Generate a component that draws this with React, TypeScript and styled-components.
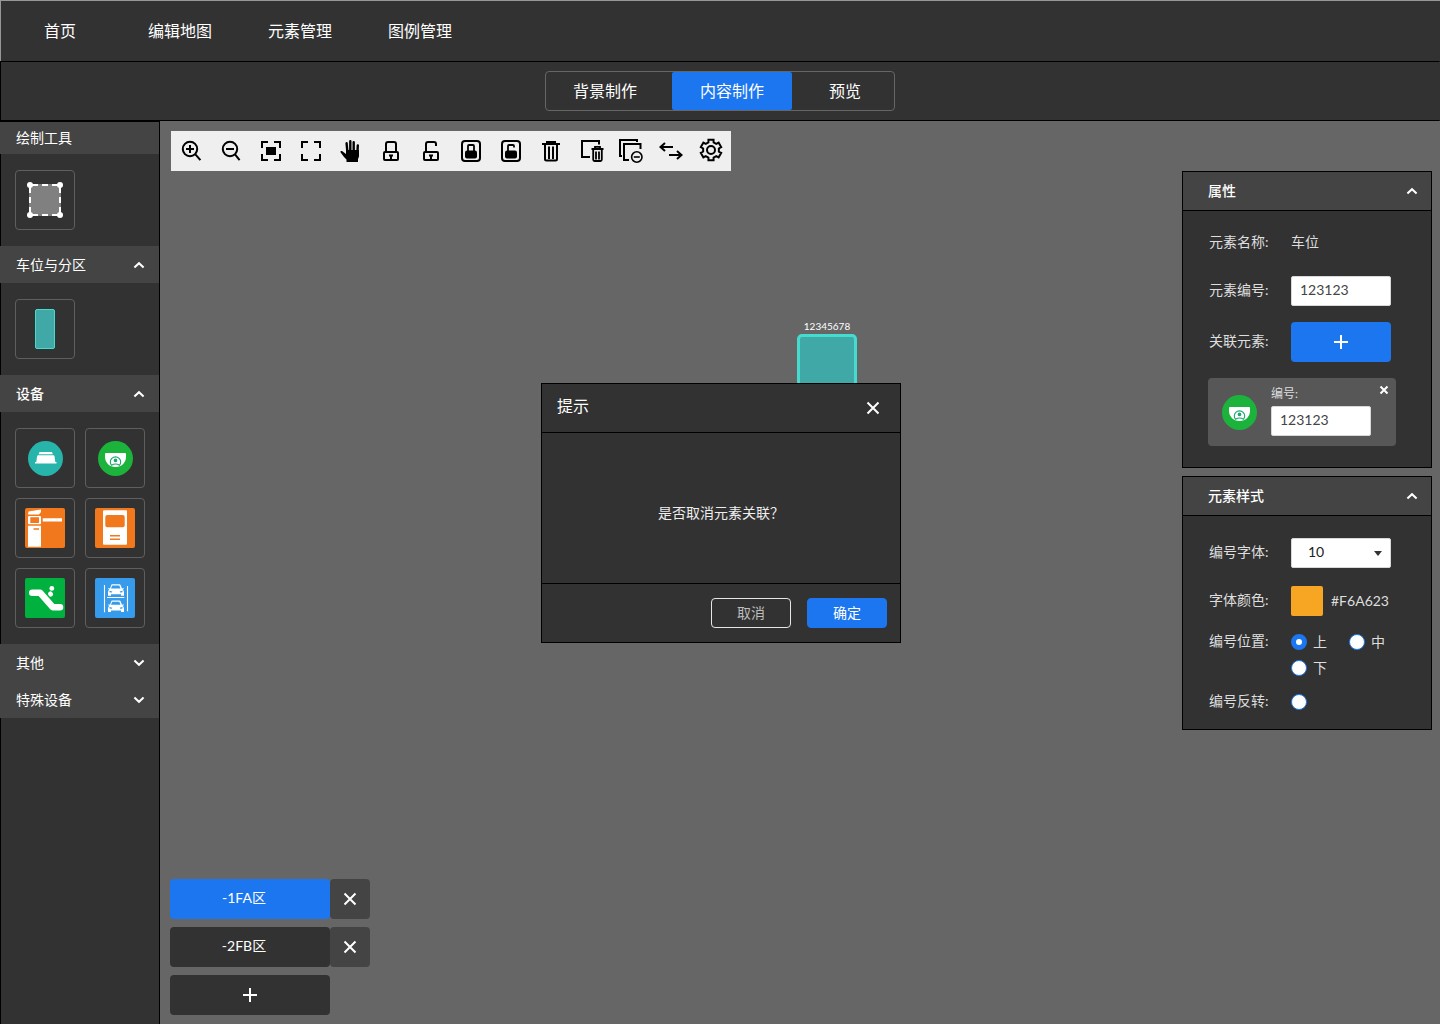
import React, { useState } from 'react';
import type { ReactNode } from 'react';
import styled, { createGlobalStyle } from 'styled-components';

const color = {
  bar: '#323232',
  raised: '#444444',
  card: '#575757',
  canvas: '#666666',
  outline: '#5f5f5f',
  blue: '#1b76f0',
  teal: '#41a8a8',
  tealEdge: '#45dccf',
  label: '#dedede',
};

const GlobalStyle = createGlobalStyle`
  *, *::before, *::after { box-sizing: border-box; }
  body {
    margin: 0;
    background: ${color.canvas};
    color: #fff;
    font: 14px/20px Lato, "Noto Sans CJK SC", sans-serif;
  }
  button, input, select { font: inherit; color: inherit; margin: 0; }
  button { padding: 0; border: 0; background: none; cursor: pointer; }
  svg { display: block; flex: none; }
`;

const Page = styled.div`
  min-height: 100vh;
  display: flex;
  flex-direction: column;
`;

/* ---------- top bars ---------- */

const TopNav = styled.nav`
  display: flex;
  height: 61px;
  background: ${color.bar};
  box-shadow: inset 1px 1px #979797;
`;

const NavLink = styled.a`
  display: flex;
  align-items: center;
  justify-content: center;
  width: 120px;
  font-size: 16px;
  color: #fff;
  text-decoration: none;
`;

const StepBar = styled.div`
  display: flex;
  align-items: center;
  justify-content: center;
  height: 60px;
  background: ${color.bar};
  border: 1px solid #000;
  border-right-color: ${color.bar};
`;

const Steps = styled.div`
  display: flex;
  height: 40px;
  border: 1px solid #666;
  border-radius: 4px;
`;

const Step = styled.button<{ $active?: boolean; $pad: string }>`
  padding: ${(p) => p.$pad};
  font-size: 16px;
  border-radius: 2px;
  background: ${(p) => (p.$active ? color.blue : 'transparent')};
`;

/* ---------- sidebar ---------- */

const Workspace = styled.div`
  flex: 1;
  display: flex;
`;

const Sidebar = styled.aside`
  width: 160px;
  display: flex;
  flex-direction: column;
  background: ${color.bar};
  border-top: 1px solid #000;
  border-right: 1px solid #000;
`;

const SidebarTitle = styled.h2`
  margin: 0;
  padding: 0 16px;
  font-size: 14px;
  font-weight: 400;
  line-height: 32px;
  background: ${color.raised};
`;

const GroupHeader = styled.button<{ $strong?: boolean }>`
  display: flex;
  align-items: center;
  justify-content: space-between;
  height: 37px;
  padding: 0 14px 0 16px;
  font-weight: ${(p) => (p.$strong ? 500 : 400)};
  background: ${color.raised};
`;

const GroupBody = styled.div`
  display: grid;
  grid-template-columns: 60px 60px;
  gap: 10px;
  padding: 16px 14px;
  border-left: 1px solid #000;
`;

const SidebarRest = styled.div`
  flex: 1;
  border-left: 1px solid #000;
`;

const Tile = styled.button`
  display: flex;
  align-items: center;
  justify-content: center;
  height: 60px;
  border: 1px solid ${color.outline};
  border-radius: 4px;
`;

/* ---------- canvas ---------- */

const Canvas = styled.main`
  position: relative;
  flex: 1;
  display: flex;
  flex-direction: column;
  padding: 10px 8px 9px 10px;
`;

const Toolbar = styled.div`
  align-self: flex-start;
  display: flex;
  margin-left: 1px;
  background: #efefef;
  color: #000;
`;

const Tool = styled.button`
  width: 40px;
  height: 40px;
`;

const CanvasBody = styled.div`
  flex: 1;
  display: flex;
  justify-content: space-between;
`;

const ParkingSpot = styled.div`
  position: absolute;
  top: 197px;
  left: 637px;
  width: 60px;
  text-align: center;
  font-size: 10px;
  line-height: 16px;
`;

const SpotShape = styled.div`
  height: 120px;
  background: ${color.teal};
  border: 3px solid ${color.tealEdge};
  border-radius: 5px;
`;

const Layers = styled.div`
  align-self: flex-end;
  display: flex;
  flex-direction: column;
  gap: 8px;
`;

const LayerRow = styled.div`
  display: flex;
`;

const LayerButton = styled.button<{ $active?: boolean }>`
  width: 160px;
  height: 40px;
  padding: 0 12px 2px 0;
  border-radius: 4px;
  background: ${(p) => (p.$active ? color.blue : color.bar)};
`;

const IconButton = styled.button<{ $bg?: string; $width?: string }>`
  display: flex;
  align-items: center;
  justify-content: center;
  width: ${(p) => p.$width ?? '40px'};
  height: 40px;
  border-radius: 4px;
  background: ${(p) => p.$bg ?? 'none'};
`;

/* ---------- property panels ---------- */

const Panels = styled.div`
  display: flex;
  flex-direction: column;
  gap: 8px;
  width: 250px;
`;

const Panel = styled.section`
  background: ${color.bar};
  border: 1px solid #000;
`;

const PanelHeader = styled.button`
  display: flex;
  align-items: center;
  justify-content: space-between;
  width: 100%;
  height: 39px;
  padding: 0 13px 0 25px;
  font-weight: 500;
  background: ${color.raised};
  border-bottom: 1px solid #000;
`;

const PanelBody = styled.div<{ $pad: string }>`
  padding: ${(p) => p.$pad};
  color: ${color.label};
`;

const Field = styled.div<{ $height: number; $gap: number; $top?: boolean }>`
  display: grid;
  grid-template-columns: 82px 1fr;
  align-items: ${(p) => (p.$top ? 'start' : 'center')};
  height: ${(p) => p.$height}px;
  margin-bottom: ${(p) => p.$gap}px;
`;

const FieldLabel = styled.label`
  padding-bottom: 2px;
  line-height: 24px;
`;

const TextInput = styled.input`
  width: 100px;
  height: 30px;
  padding: 0 8px 4px;
  color: #444;
  background: #fff;
  border: 1px solid #d8d8d8;
  border-radius: 2px;
`;

const LinkedCard = styled.div`
  display: flex;
  align-items: center;
  height: 68px;
  margin-left: -1px;
  padding: 0 7px 0 14px;
  background: ${color.card};
  border-radius: 4px;
`;

const LinkedField = styled.label`
  align-self: flex-start;
  display: flex;
  flex-direction: column;
  gap: 4px;
  margin: 8px 8px 0 14px;
  font-size: 12px;
  line-height: 16px;

  input { font-size: 14px; }
`;

const CardClose = styled.button`
  align-self: flex-start;
  padding-top: 7px;
`;

const SelectBox = styled.div`
  position: relative;
  width: 100px;
  color: #222;

  select {
    appearance: none;
    width: 100%;
    height: 30px;
    padding: 0 16px 2px;
    background: #fff;
    border: 1px solid #d8d8d8;
    border-radius: 2px;
  }
  svg {
    position: absolute;
    top: 13px;
    right: 9px;
    pointer-events: none;
  }
`;

const ColorValue = styled.div`
  display: flex;
  align-items: center;
  gap: 8px;
`;

const Swatch = styled.button`
  width: 32px;
  height: 30px;
  border-radius: 2px;
  background: #f6a623;
`;

const RadioGrid = styled.div`
  display: grid;
  grid-template-columns: 58px 1fr;
  grid-auto-rows: 26px;
`;

const RadioLabel = styled.label`
  display: flex;
  align-items: center;
  gap: 6px;
`;

const Radio = styled.input`
  appearance: none;
  width: 16px;
  height: 16px;
  margin: 0;
  border: 1px solid ${color.blue};
  border-radius: 50%;
  background: #fff;

  &:checked { border-width: 5px; }
`;

/* ---------- dialog ---------- */

const Overlay = styled.div`
  position: fixed;
  inset: 0;
  display: flex;
  align-items: center;
  justify-content: center;
  padding: 2px 0 0 2px;
`;

const Dialog = styled.section`
  width: 360px;
  background: ${color.bar};
  border: 1px solid #000;
`;

const DialogHeader = styled.header`
  display: flex;
  align-items: center;
  justify-content: space-between;
  height: 49px;
  padding: 0 7px 0 15px;
  border-bottom: 1px solid #000;

  h2 {
    margin: 0;
    padding-bottom: 4px;
    font-size: 16px;
    font-weight: 400;
  }
`;

const DialogBody = styled.div`
  display: flex;
  align-items: center;
  justify-content: center;
  height: 150px;
  padding-top: 10px;
  color: #eee;
`;

const DialogFooter = styled.footer`
  display: flex;
  align-items: center;
  justify-content: flex-end;
  gap: 16px;
  height: 59px;
  padding: 0 13px;
  border-top: 1px solid #000;
`;

const DialogButton = styled.button<{ $primary?: boolean }>`
  width: 80px;
  height: 30px;
  border-radius: 4px;
  border: 1px solid ${(p) => (p.$primary ? color.blue : '#e6e6e6')};
  background: ${(p) => (p.$primary ? color.blue : 'transparent')};
  color: ${(p) => (p.$primary ? '#fff' : '#bcbcbc')};
`;

/* ---------- icons ---------- */

const Chevron = ({ up }: { up?: boolean }) => (
  <svg width="12" height="8" viewBox="0 0 12 8" fill="none" stroke="#fff" strokeWidth="2">
    <path d={up ? 'M1.4 6.5 6 2.2 10.6 6.5' : 'M1.4 1.5 6 5.8 10.6 1.5'} />
  </svg>
);

const Cross = ({ size = 14 }: { size?: number }) => (
  <svg width={size} height={size} viewBox={`0 0 ${size} ${size}`} stroke="#fff" strokeWidth="2">
    <path d={`M1.5 1.5 ${size - 1.5} ${size - 1.5}M${size - 1.5} 1.5 1.5 ${size - 1.5}`} />
  </svg>
);

const Plus = () => (
  <svg width="14" height="14" viewBox="0 0 14 14" fill="#fff">
    <path d="M6 0h2v6h6v2H8v6H6V8H0V6h6z" />
  </svg>
);

const gearPath = (() => {
  const at = (deg: number, r: number) => {
    const a = (deg * Math.PI) / 180;
    return `${(20 + r * Math.cos(a)).toFixed(2)} ${(19 + r * Math.sin(a)).toFixed(2)}`;
  };
  const points: string[] = [];
  for (let i = 0; i < 6; i += 1) {
    const a = 30 + i * 60;
    points.push(at(a - 19, 8), at(a - 14, 10.6), at(a + 14, 10.6), at(a + 19, 8));
  }
  return `M${points.join('L')}Z`;
})();

const Brackets = () => <path d="M11 17v-6h6M23 11h6v6M29 23v6h-6M17 29h-6v-6" />;

const tools: { name: string; art: ReactNode }[] = [
  { name: '放大', art: <><circle cx="19" cy="18" r="7.2" /><path d="M24.4 23.4l5 5.8M15 18h8M19 14v8" /></> },
  { name: '缩小', art: <><circle cx="19" cy="18" r="7.2" /><path d="M24 23.4l4.6 5.8M15 18h8" /></> },
  { name: '适应画布', art: <><Brackets /><path d="M15 16h10v8H15z" fill="currentColor" stroke="none" /></> },
  { name: '全屏', art: <Brackets /> },
  {
    name: '拖动',
    art: (
      <>
        <path d="M15 19h13v6.500L27 28v3H15.500v-2.500L13 26l-3.500-4.800q-.4-1.700 1.500-1.200L15 23z" fill="currentColor" stroke="none" />
        <path d="M15.600 12.300 16.400 21M19.300 10.200V21M22.700 11.300V21M26.800 14.500l-.4 7" strokeWidth="2.400" strokeLinecap="round" />
      </>
    ),
  },
  {
    name: '锁定',
    art: <><rect x="13" y="21" width="14" height="8" rx="1" /><path d="M15 21v-8q0-2 2-2h6q2 0 2 2v8" /><path d="M18 23.500h4v2h-1V28h-2v-2.500h-1z" fill="currentColor" stroke="none" /></>,
  },
  {
    name: '解锁',
    art: <><rect x="13" y="21" width="14" height="8" rx="1" /><path d="M15 21v-8q0-2 2-2h6q2 0 2 2v2" /><path d="M18 23.500h4v2h-1V28h-2v-2.500h-1z" fill="currentColor" stroke="none" /></>,
  },
  {
    name: '全部锁定',
    art: <><rect x="11" y="10" width="18" height="20" rx="3" /><rect x="14" y="19.500" width="12" height="8" rx="2" fill="currentColor" stroke="none" /><path d="M17 20v-5q0-1 1-1h4q1 0 1 1v5" strokeWidth="1.800" /></>,
  },
  {
    name: '全部解锁',
    art: <><rect x="11" y="10" width="18" height="20" rx="3" /><rect x="14" y="19.500" width="12" height="8" rx="2" fill="currentColor" stroke="none" /><path d="M17 20v-5q0-1 1-1h4q1 0 1 1v1.500" strokeWidth="1.800" /></>,
  },
  { name: '删除', art: <path d="M11 13h18M16 12.500V11h8v1.500M14 14v14q0 1.500 1.500 1.500h9Q26 29.500 26 28V14M18 15.500V28M22 15.500V28" /> },
  {
    name: '删除图层',
    art: <><path d="M19 26h-8V10h17v3.500" /><path d="M20.500 18h12M24 17.500v-1.700h5v1.700M22.200 18.500v10q0 1.500 1.300 1.500h6q1.300 0 1.300-1.500v-10M25 20.500v8M28 20.500v8" strokeWidth="1.800" /></>,
  },
  {
    name: '清空',
    art: <><path d="M11 25H9V9h17v2M18 29h-5V13h16.500v5" /><circle cx="25.800" cy="26" r="5.200" strokeWidth="1.600" /><path d="M22.800 26h6" strokeWidth="1.600" /></>,
  },
  { name: '交换', art: <path d="M22 16H9.500M14 12l-4.500 4 4.500 4M18 24h12.500M26 20l4.500 4-4.500 4" /> },
  { name: '设置', art: <><path d={gearPath} /><circle cx="20" cy="19" r="4" /></> },
];

const AreaIcon = () => (
  <svg width="36" height="36" viewBox="0 0 36 36">
    <path d="M2 2h32v32H2z" fill="#808080" />
    <rect x="3" y="3" width="30" height="30" fill="none" stroke="#fff" strokeWidth="2" strokeDasharray="6 4" strokeDashoffset="-2" />
    <g fill="#fff">
      <circle cx="3" cy="3" r="3" /><circle cx="33" cy="3" r="3" />
      <circle cx="3" cy="33" r="3" /><circle cx="33" cy="33" r="3" />
    </g>
  </svg>
);

const SpotIcon = () => (
  <svg width="20" height="40" viewBox="0 0 20 40">
    <rect x=".5" y=".5" width="19" height="39" rx="1.500" fill={color.teal} stroke={color.tealEdge} />
  </svg>
);

const SensorIcon = () => (
  <svg width="35" height="35" viewBox="0 0 35 35">
    <circle cx="17.500" cy="17.500" r="17.500" fill="#27b5ab" />
    <path d="M11.500 11h12.500l.8 2.300H10.700zM10.300 14.200h15q1 0 1.200 1l.8 5.800H8.300l.8-5.800q.2-1 1.200-1zM7 21h21.500v1.500H7z" fill="#fff" />
  </svg>
);

const CameraIcon = () => (
  <svg width="35" height="35" viewBox="0 0 35 35">
    <circle cx="17.500" cy="17.500" r="17.500" fill="#1bb33c" />
    <path d="M7 12.800q0-.8 1-.8h19q1 0 1 .8v3.200c0 5-4 10-10.500 10S7 21 7 16z" fill="#fff" />
    <g fill="none" stroke="#16a86e" strokeWidth="1.100">
      <path d="M13.800 24.700a5.200 5.200 0 1 1 7.400 0M13.600 24.200q3.900-2.400 7.800 0" />
      <circle cx="17.500" cy="19.300" r="1.300" fill="#16a86e" />
    </g>
  </svg>
);

const GateIcon = () => (
  <svg width="40" height="40" viewBox="0 0 40 40">
    <rect width="40" height="40" rx="2" fill="#f1781d" />
    <path d="M3.500 3.500 16 1.500V4l-2 2.500H3zM3 17.800h13v20.900H3zM17.700 10.300H37v3.200H17.700z" fill="#fff" />
    <rect x="3" y="8" width="13" height="8.300" rx="1" fill="#fff" />
    <path d="M5.300 9.300h8.700v5.700H5.300zM8.500 20.300h5.500v1.500H8.500z" fill="#f1781d" />
  </svg>
);

const KioskIcon = () => (
  <svg width="40" height="40" viewBox="0 0 40 40">
    <rect width="40" height="40" rx="2" fill="#f1781d" />
    <rect x="8" y="2.300" width="24" height="34.500" rx="1" fill="#fff" />
    <rect x="10.300" y="7" width="19.400" height="12.300" rx="2" fill="#f1781d" />
    <path d="M15 27h10v1.500H15zM15 30.400h10v1.500H15z" fill="#f1781d" />
  </svg>
);

const EscalatorIcon = () => (
  <svg width="40" height="40" viewBox="0 0 40 40">
    <rect width="40" height="40" rx="2" fill="#00b140" />
    <path d="M7.300 14.700H15L27.700 29.200H35" fill="none" stroke="#fff" strokeWidth="6.600" strokeLinecap="round" strokeLinejoin="round" />
    <circle cx="26.800" cy="10.400" r="2.400" fill="#fff" />
    <ellipse cx="25.600" cy="16" rx="2.300" ry="2.700" transform="rotate(-30 25.600 16)" fill="#fff" />
  </svg>
);

const Car = ({ y }: { y: number }) => (
  <g transform={`translate(12.500 ${y})`}>
    <path d="M4.500 0h7.500q.8 0 1.200 1l1.300 3.200 1.500-.5.400 1-1.200.6Q16.500 6.500 16.500 8v3.500h-3V10h-10v1.500h-3V8q0-1.500 1.300-2.700L.6 4.700l.4-1 1.500.5L3.700 1Q4 0 4.500 0z" fill="#fff" />
    <path d="M4.700 1.300h7.100l1.200 3H3.500zM2 6.500l2.800.8-.5 1L2 8zM15 6.500l-2.800.8.500 1L15 8z" fill="#359bea" />
  </g>
);

const ParkingIcon = () => (
  <svg width="40" height="40" viewBox="0 0 40 40">
    <rect width="40" height="40" rx="2" fill="#359bea" />
    <path d="M9.500 7v27.300M32.500 8v25.300M12 19.500h17.300" stroke="#fff" strokeWidth="1.100" />
    <Car y={6.2} />
    <Car y={22.5} />
  </svg>
);

const devices = [
  { name: '车位探测器', art: <SensorIcon /> },
  { name: '摄像机', art: <CameraIcon /> },
  { name: '道闸', art: <GateIcon /> },
  { name: '查询机', art: <KioskIcon /> },
  { name: '扶梯', art: <EscalatorIcon /> },
  { name: '立体车位', art: <ParkingIcon /> },
];

export default function App() {
  const [open, setOpen] = useState(true);
  const [layer, setLayer] = useState('-1FA区');

  return (
    <Page>
      <GlobalStyle />
      <TopNav>
        {['首页', '编辑地图', '元素管理', '图例管理'].map((item) => (
          <NavLink key={item} href="#">{item}</NavLink>
        ))}
      </TopNav>
      <StepBar>
        <Steps>
          <Step $pad="0 35px 0 27px">背景制作</Step>
          <Step $pad="0 28px" $active>内容制作</Step>
          <Step $pad="0 33px 0 37px">预览</Step>
        </Steps>
      </StepBar>

      <Workspace>
        <Sidebar>
          <SidebarTitle>绘制工具</SidebarTitle>
          <GroupBody>
            <Tile aria-label="区域"><AreaIcon /></Tile>
          </GroupBody>
          <GroupHeader>车位与分区<Chevron up /></GroupHeader>
          <GroupBody>
            <Tile aria-label="车位"><SpotIcon /></Tile>
          </GroupBody>
          <GroupHeader $strong>设备<Chevron up /></GroupHeader>
          <GroupBody>
            {devices.map((d) => (
              <Tile key={d.name} aria-label={d.name}>{d.art}</Tile>
            ))}
          </GroupBody>
          <GroupHeader>其他<Chevron /></GroupHeader>
          <GroupHeader>特殊设备<Chevron /></GroupHeader>
          <SidebarRest />
        </Sidebar>

        <Canvas>
          <Toolbar role="toolbar">
            {tools.map((t) => (
              <Tool key={t.name} aria-label={t.name}>
                <svg width="40" height="40" viewBox="0 0 40 40" fill="none" stroke="currentColor" strokeWidth="2">
                  {t.art}
                </svg>
              </Tool>
            ))}
          </Toolbar>

          <ParkingSpot>
            12345678
            <SpotShape />
          </ParkingSpot>

          <CanvasBody>
            <Layers>
              {['-1FA区', '-2FB区'].map((name) => (
                <LayerRow key={name}>
                  <LayerButton $active={layer === name} onClick={() => setLayer(name)}>{name}</LayerButton>
                  <IconButton $bg={color.raised} aria-label="删除区域"><Cross /></IconButton>
                </LayerRow>
              ))}
              <IconButton $bg={color.bar} $width="160px" aria-label="添加区域"><Plus /></IconButton>
            </Layers>

            <Panels>
              <Panel>
                <PanelHeader>属性<Chevron up /></PanelHeader>
                <PanelBody $pad="15px 35px 21px 26px">
                  <Field $height={34} $gap={16}>
                    <FieldLabel as="span">元素名称:</FieldLabel>
                    <FieldLabel as="span">车位</FieldLabel>
                  </Field>
                  <Field $height={30} $gap={16}>
                    <FieldLabel htmlFor="element-code">元素编号:</FieldLabel>
                    <TextInput id="element-code" defaultValue="123123" />
                  </Field>
                  <Field $height={40} $gap={16}>
                    <FieldLabel as="span">关联元素:</FieldLabel>
                    <IconButton $bg={color.blue} $width="100px" aria-label="添加关联元素"><Plus /></IconButton>
                  </Field>
                  <LinkedCard>
                    <CameraIcon />
                    <LinkedField>
                      编号:
                      <TextInput defaultValue="123123" />
                    </LinkedField>
                    <CardClose aria-label="取消关联"><Cross size={10} /></CardClose>
                  </LinkedCard>
                </PanelBody>
              </Panel>

              <Panel>
                <PanelHeader>元素样式<Chevron up /></PanelHeader>
                <PanelBody $pad="22px 16px 6px 26px">
                  <Field $height={30} $gap={18}>
                    <FieldLabel htmlFor="code-size">编号字体:</FieldLabel>
                    <SelectBox>
                      <select id="code-size" defaultValue="10">
                        <option>10</option>
                        <option>12</option>
                      </select>
                      <svg width="8" height="5" viewBox="0 0 8 5"><path d="M0 0h8L4 5z" fill="#333" /></svg>
                    </SelectBox>
                  </Field>
                  <Field $height={30} $gap={13}>
                    <FieldLabel as="span">字体颜色:</FieldLabel>
                    <ColorValue><Swatch aria-label="选择颜色" />#F6A623</ColorValue>
                  </Field>
                  <Field $height={52} $gap={8} $top>
                    <FieldLabel as="span">编号位置:</FieldLabel>
                    <RadioGrid>
                      <RadioLabel><Radio type="radio" name="position" defaultChecked />上</RadioLabel>
                      <RadioLabel><Radio type="radio" name="position" />中</RadioLabel>
                      <RadioLabel><Radio type="radio" name="position" />下</RadioLabel>
                    </RadioGrid>
                  </Field>
                  <Field $height={26} $gap={8}>
                    <FieldLabel htmlFor="flip">编号反转:</FieldLabel>
                    <Radio type="radio" id="flip" />
                  </Field>
                </PanelBody>
              </Panel>
            </Panels>
          </CanvasBody>
        </Canvas>
      </Workspace>

      {open && (
        <Overlay>
          <Dialog role="dialog" aria-modal="true" aria-labelledby="dialog-title">
            <DialogHeader>
              <h2 id="dialog-title">提示</h2>
              <IconButton aria-label="关闭" onClick={() => setOpen(false)}><Cross /></IconButton>
            </DialogHeader>
            <DialogBody>是否取消元素关联？</DialogBody>
            <DialogFooter>
              <DialogButton onClick={() => setOpen(false)}>取消</DialogButton>
              <DialogButton $primary onClick={() => setOpen(false)}>确定</DialogButton>
            </DialogFooter>
          </Dialog>
        </Overlay>
      )}
    </Page>
  );
}
